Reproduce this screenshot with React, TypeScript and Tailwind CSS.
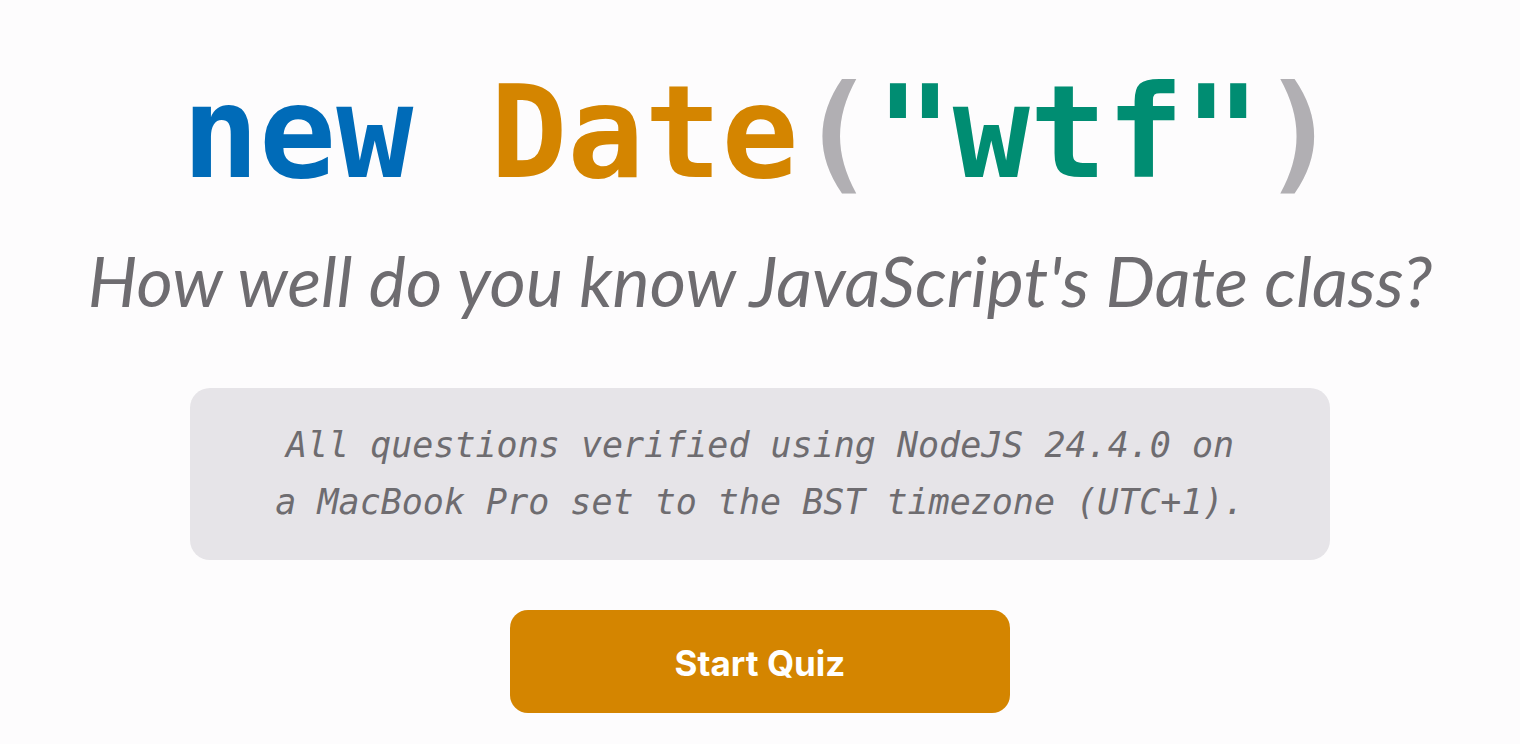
import React from "react";

export default function App() {
  return (
    <div className="min-h-[744px] w-full bg-[#fdfcfd] flex flex-col items-center">
      <h1
        className="mt-[58px] text-[128px] leading-[150px] font-bold whitespace-pre"
        style={{ fontFamily: '"DejaVu Sans Mono", monospace' }}
      >
        <span className="text-[#006bb8]">new</span>
        <span> </span>
        <span className="text-[#d48500]">Date</span>
        <span className="text-[#b1afb3]">(</span>
        <span className="text-[#008d72]">"wtf"</span>
        <span className="text-[#b1afb3]">)</span>
      </h1>
      <p
        className="mt-[32px] text-[70px] leading-[80px] italic text-[#6e6c70] whitespace-nowrap"
        style={{ fontFamily: 'Lato, "Open Sans", sans-serif' }}
      >
        How well do you know JavaScript's Date class?
      </p>
      <div className="mt-[68px] w-[1140px] rounded-[20px] bg-[#e6e4e8] py-[29px] text-center">
        <p
          className="text-[35px] leading-[57px] italic text-[#6e6c70]"
          style={{ fontFamily: '"DejaVu Sans Mono", monospace' }}
        >
          All questions verified using NodeJS 24.4.0 on
          <br />a MacBook Pro set to the BST timezone (UTC+1).
        </p>
      </div>
      <button
        className="mt-[50px] w-[500px] h-[103px] pt-[3px] rounded-[18px] bg-[#d48500] text-white text-[35px] font-bold"
        style={{ fontFamily: 'Inter, "Liberation Sans", sans-serif' }}
      >
        Start Quiz
      </button>
    </div>
  );
}
